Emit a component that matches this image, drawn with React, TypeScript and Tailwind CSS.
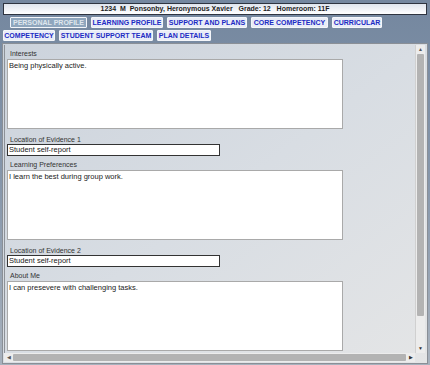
import React from "react";

const Tab = ({ label, w, active }: { label: string; w: string; active?: boolean }) => (
  <div
    className={
      "h-[11px] shrink-0 whitespace-nowrap flex items-center justify-center border border-[#f4f6fa] rounded-[1px] text-[7px] font-bold leading-none " +
      w +
      " " +
      (active ? "bg-[#8fa6bd] text-[#dfe6ee]" : "bg-[#e9edf7] text-[#1c2bc4]")
    }
  >
    {label}
  </div>
);

const Label = ({ children }: { children: React.ReactNode }) => (
  <div className="pl-[3px] text-[7px] leading-[8px] text-[#333]">{children}</div>
);

const Area = ({ text }: { text: string }) => (
  <div className="mt-[1px] w-[336px] h-[70px] shrink-0 bg-white border border-[#a9a9a9] px-[1px] pt-[1px] text-[7.5px] leading-[10px] text-[#222]">
    {text}
  </div>
);

const Input = ({ text }: { text: string }) => (
  <div className="w-[213px] h-[12px] shrink-0 bg-white border border-[#333] px-[1px] text-[7.5px] leading-[10px] text-[#222]">
    {text}
  </div>
);

export default function App() {
  return (
    <div
      className="w-[430px] h-[365px] overflow-hidden bg-gradient-to-b from-[#74879f] via-[#8797ab] to-[#a7b1bd] pt-[3px]"
      style={{ fontFamily: '"Liberation Sans", Arial, sans-serif' }}
    >
      <div className="mx-[3px] h-[12px] border border-[#2e3440] bg-gradient-to-b from-[#dfe5ee] to-white flex items-center justify-center text-[7px] font-bold text-[#1d1d1d] whitespace-pre">
        {"1234  M  Ponsonby, Heronymous Xavier   Grade: 12   Homeroom: 11F"}
      </div>
      <div className="mt-[2px] flex gap-[4px] pl-[10px]">
        <Tab label="PERSONAL PROFILE" w="w-[77px]" active />
        <Tab label="LEARNING PROFILE" w="w-[72px]" />
        <Tab label="SUPPORT AND PLANS" w="w-[80px]" />
        <Tab label="CORE COMPETENCY" w="w-[77px]" />
        <Tab label="CURRICULAR" w="w-[50px]" />
      </div>
      <div className="mt-[2px] flex gap-[4px] pl-[3px]">
        <Tab label="COMPETENCY" w="w-[52px]" />
        <Tab label="STUDENT SUPPORT TEAM" w="w-[94px]" />
        <Tab label="PLAN DETAILS" w="w-[54px]" />
      </div>
      <div className="mx-[2px] mt-[2px] h-[321px] border border-[#8a8f96] bg-gradient-to-br from-[#ccd3dc] via-[#d8dde3] to-[#e4e5e6] p-[1px] flex flex-col">
        <div className="flex-1 flex min-h-0 border-l border-[#8d9197]">
          <div className="flex-1 overflow-hidden pl-[2px] pt-[5px] flex flex-col">
            <Label>Interests</Label>
            <Area text="Being physically active." />
            <div className="mt-[7px]">
              <Label>Location of Evidence 1</Label>
            </div>
            <Input text="Student self-report" />
            <div className="mt-[5px]">
              <Label>Learning Preferences</Label>
            </div>
            <Area text="I learn the best during group work." />
            <div className="mt-[7px]">
              <Label>Location of Evidence 2</Label>
            </div>
            <Input text="Student self-report" />
            <div className="mt-[5px]">
              <Label>About Me</Label>
            </div>
            <Area text="I can presevere with challenging tasks." />
          </div>
          <div className="w-[10px] mr-[1px] bg-[#ececec] border-l border-[#d0d0d0] flex flex-col items-center">
            <div className="h-[9px] flex items-center justify-center text-[5px] text-[#555]">▲</div>
            <div className="w-[7px] h-[262px] bg-[#b3b3b3] rounded-[1px]" />
            <div className="flex-1" />
            <div className="h-[9px] flex items-center justify-center text-[5px] text-[#333]">▼</div>
          </div>
        </div>
        <div className="h-[9px] flex mr-[11px] bg-[#ececec] items-center">
          <div className="w-[9px] flex items-center justify-center text-[5px] text-[#555]">◀</div>
          <div className="flex-1 h-[7px] bg-[#b3b3b3] rounded-[1px]" />
          <div className="w-[9px] flex items-center justify-center text-[5px] text-[#333]">▶</div>
        </div>
      </div>
    </div>
  );
}
